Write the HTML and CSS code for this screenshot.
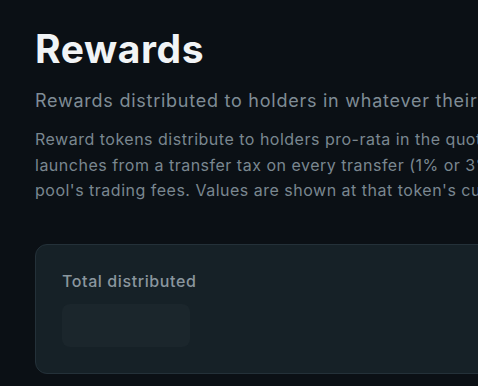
FILE: index.html
```html
<!DOCTYPE html>
<html lang="en">
<head>
    <meta charset="UTF-8">
    <meta name="viewport" content="width=device-width, initial-scale=1.0">
    <title>Rewards</title>
    <link rel="stylesheet" href="styles.css">
</head>
<body>

<main class="page">
    <h1 class="page-title">Rewards</h1>
    <p class="page-lead">Rewards distributed to holders in whatever their launch was paired with.</p>
    <p class="page-text">Reward tokens distribute to holders pro-rata in the quote token of each launch. Fees come from<br>
        launches from a transfer tax on every transfer (1% or 3%, set at launch) and from the<br>
        pool's trading fees. Values are shown at that token's current price.</p>

    <!-- totals -->
    <section class="stat-card">
        <div class="stat-label">Total distributed</div>
        <div class="skeleton"></div>
    </section>
</main>

</body>
</html>
```

FILE: styles.css
```css
/* page */
body {
    margin: 0;
    background-color: #0b1015;
    font-family: Inter, "Open Sans", sans-serif;
    overflow: hidden;
}

.page {
    width: 900px;
    padding: 26px 35px;
}

.page-title {
    margin: 0;
    color: #f1f4f6;
    font-size: 39px;
    font-weight: 700;
    letter-spacing: 0.6px;
    line-height: 46px;
}

.page-lead {
    margin: 16px 0 0;
    color: #7f8c95;
    font-size: 18px;
    letter-spacing: 0.75px;
    line-height: 26px;
    white-space: nowrap;
}

.page-text {
    margin: 13px 0 0;
    color: #7a8790;
    font-size: 16px;
    letter-spacing: 0.5px;
    line-height: 25.5px;
    white-space: nowrap;
}

/* card */
.stat-card {
    margin-top: 40px;
    width: 620px;
    height: 130px;
    box-sizing: border-box;
    padding: 26px 26px;
    background-color: #162127;
    border: 1px solid #243139;
    border-radius: 12px;
}

.stat-label {
    color: #8a969e;
    font-size: 16px;
    font-weight: 500;
    letter-spacing: 0.6px;
    line-height: 20px;
}

.skeleton {
    margin-top: 13px;
    width: 128px;
    height: 43px;
    background-color: #1b262c;
    border-radius: 8px;
}
```
